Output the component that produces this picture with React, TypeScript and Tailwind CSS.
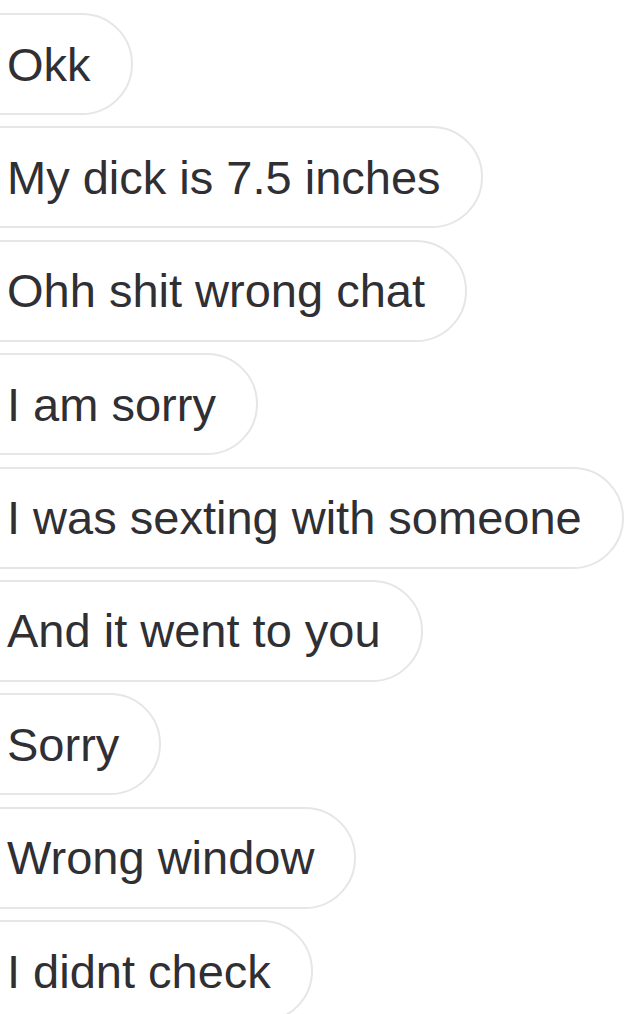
import React from "react";

const messages = [
  "Okk",
  "My dick is 7.5 inches",
  "Ohh shit wrong chat",
  "I am sorry",
  "I was sexting with someone",
  "And it went to you",
  "Sorry",
  "Wrong window",
  "I didnt check",
];

export default function App() {
  return (
    <div
      className="w-[640px] h-[1014px] overflow-hidden bg-white"
      style={{ fontFamily: '"Liberation Sans", Arial, Helvetica, sans-serif' }}
    >
      <div className="flex flex-col items-start gap-[11.4px] pt-[13px]">
        {messages.map((m) => (
          <div
            key={m}
            className="ml-[-60px] pl-[65px] pr-[40px] h-[102px] flex items-center rounded-full border-2 border-[#e6e6e6] bg-white text-[47px] leading-none text-[#2f2f34] whitespace-nowrap"
          >
            {m}
          </div>
        ))}
      </div>
    </div>
  );
}
